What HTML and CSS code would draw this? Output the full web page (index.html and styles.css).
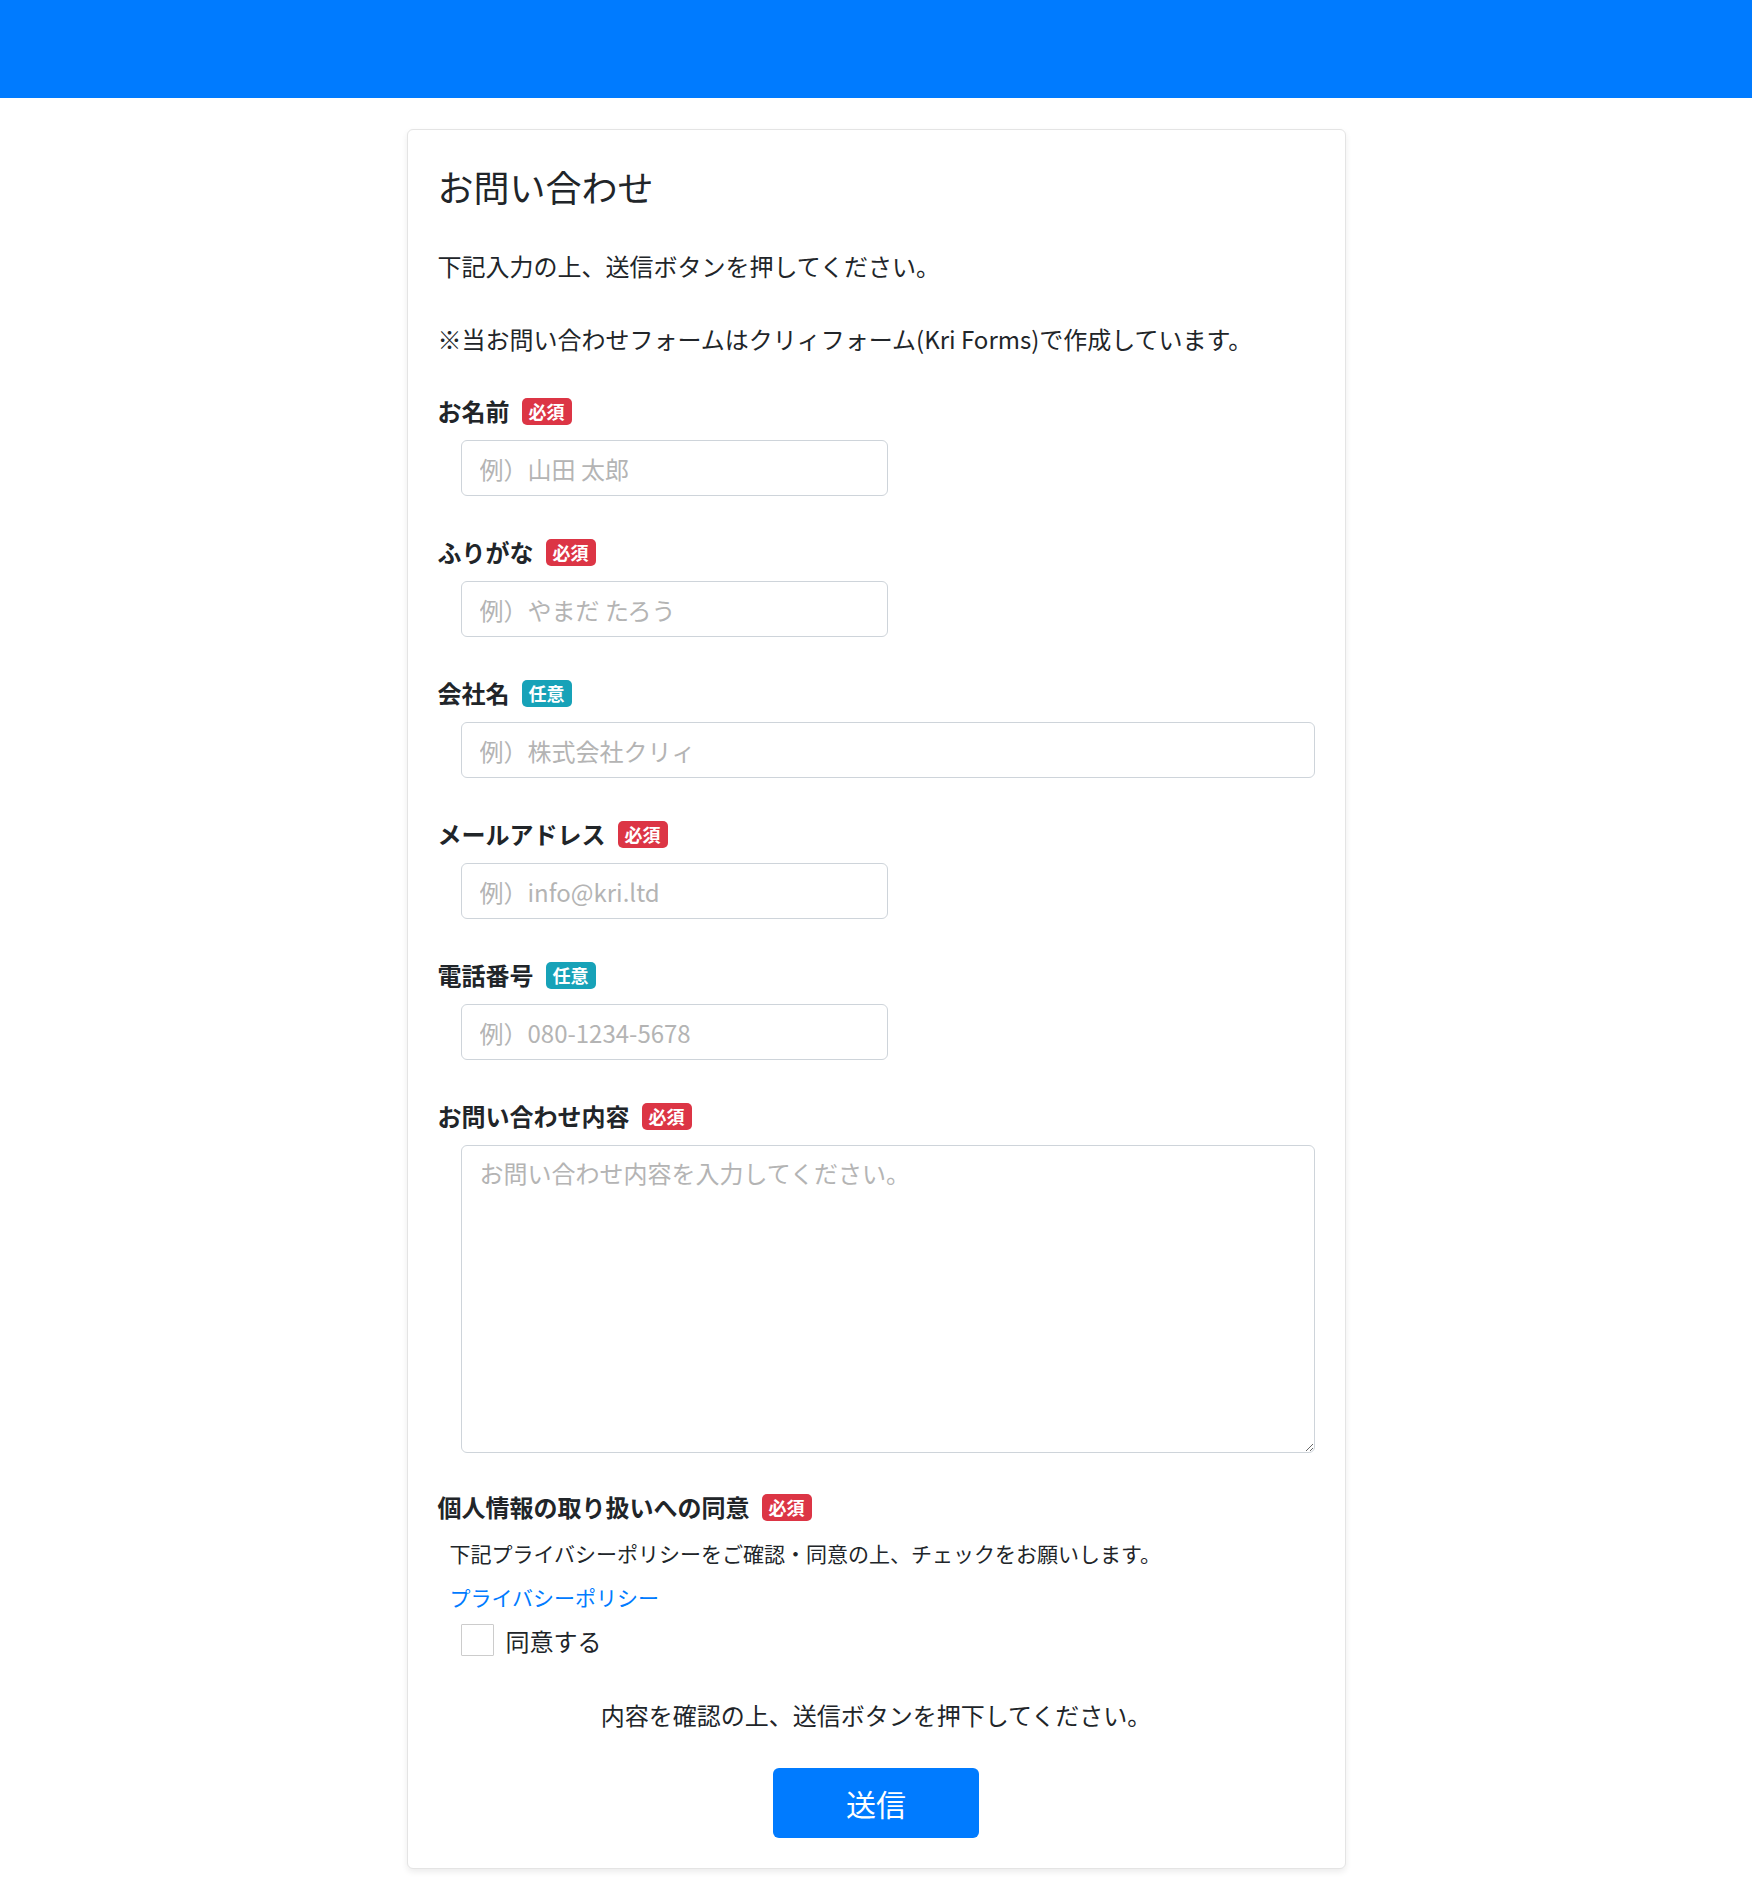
FILE: index.html
```html
<!DOCTYPE html>
<html lang="ja">
<head>
<meta charset="utf-8">
<title>お問い合わせ</title>
<link rel="stylesheet" href="styles.css">
</head>
<body>
<header class="topbar"></header>
<main class="card">
  <h1 class="title">お問い合わせ</h1>
  <p class="lead">下記入力の上、送信ボタンを押してください。</p>
  <p class="lead note">※当お問い合わせフォームはクリィフォーム(Kri Forms)で作成しています。</p>

  <form class="form">
    <div class="group">
      <div class="label-row"><span class="label">お名前</span><span class="badge req">必須</span></div>
      <input class="control narrow" type="text" placeholder="例）山田 太郎">
    </div>
    <div class="group">
      <div class="label-row"><span class="label">ふりがな</span><span class="badge req">必須</span></div>
      <input class="control narrow" type="text" placeholder="例）やまだ たろう">
    </div>
    <div class="group">
      <div class="label-row"><span class="label">会社名</span><span class="badge opt">任意</span></div>
      <input class="control wide" type="text" placeholder="例）株式会社クリィ">
    </div>
    <div class="group">
      <div class="label-row"><span class="label">メールアドレス</span><span class="badge req">必須</span></div>
      <input class="control narrow" type="text" placeholder="例）info@kri.ltd">
    </div>
    <div class="group">
      <div class="label-row"><span class="label">電話番号</span><span class="badge opt">任意</span></div>
      <input class="control narrow" type="text" placeholder="例）080-1234-5678">
    </div>
    <div class="group group-text">
      <div class="label-row"><span class="label">お問い合わせ内容</span><span class="badge req">必須</span></div>
      <textarea class="control wide area" placeholder="お問い合わせ内容を入力してください。"></textarea>
    </div>
    <div class="consent">
      <div class="label-row"><span class="label">個人情報の取り扱いへの同意</span><span class="badge req">必須</span></div>
      <p class="small">下記プライバシーポリシーをご確認・同意の上、チェックをお願いします。</p>
      <a class="link" href="#">プライバシーポリシー</a>
      <label class="check-row"><input class="check" type="checkbox"><span>同意する</span></label>
    </div>
    <p class="confirm">内容を確認の上、送信ボタンを押下してください。</p>
    <div class="actions"><button class="submit" type="button">送信</button></div>
  </form>
</main>
</body>
</html>
```

FILE: styles.css
```css
html, body {
  margin: 0;
  padding: 0;
  background: #ffffff;
}
body {
  font-family: "Noto Sans CJK JP", "Noto Sans", sans-serif;
  color: #212529;
  font-size: 24px;
}
.topbar {
  height: 98px;
  background: #007bff;
}
.card {
  width: 877px;
  margin: 31px auto 30px;
  padding: 30px;
  border: 1px solid #e4e4e4;
  border-radius: 6px;
  box-shadow: 0 3px 6px rgba(0, 0, 0, 0.08);
  background: #fff;
}
.title {
  margin: 0;
  font-size: 36px;
  font-weight: 400;
  line-height: 52px;
}
.lead {
  margin: 36px 0 0;
  font-size: 24px;
  line-height: 36px;
}
.lead.note {
  margin-top: 37px;
}
.form {
  margin-top: 36px;
}
.group {
  margin-bottom: 38px;
}
.group-text {
  margin-bottom: 36px;
}
.label-row {
  display: flex;
  align-items: center;
  height: 36px;
}
.label {
  font-weight: 700;
  font-size: 24px;
  line-height: 36px;
}
.badge {
  display: inline-block;
  margin-left: 12px;
  padding: 0 7px;
  height: 27px;
  line-height: 27px;
  border-radius: 5px;
  color: #fff;
  font-size: 18px;
  font-weight: 700;
}
.badge.req { background: #dc3545; }
.badge.opt { background: #17a2b8; }
.control {
  display: block;
  box-sizing: border-box;
  margin: 11px 0 0 23px;
  height: 56px;
  padding: 9px 18px;
  border: 1px solid #ced4da;
  border-radius: 6px;
  font-family: inherit;
  font-size: 24px;
  line-height: 36px;
  color: #495057;
  background: #fff;
}
.control::placeholder {
  color: #b4b4b4;
}
.narrow { width: 427px; }
.wide { width: 854px; }
.area {
  height: 308px;
  resize: vertical;
}
.small {
  margin: 12px 0 0 12px;
  font-size: 21px;
  line-height: 32px;
}
.link {
  display: block;
  margin: 12px 0 0 12px;
  font-size: 21px;
  line-height: 32px;
  color: #007bff;
  text-decoration: none;
}
.check-row {
  display: flex;
  align-items: center;
  gap: 12px;
  margin: 9px 0 0 23px;
  height: 36px;
  font-size: 24px;
}
.check {
  appearance: none;
  -webkit-appearance: none;
  margin: 0;
  width: 33px;
  height: 32px;
  border: 1px solid #cccccc;
  border-radius: 1px;
  background: #fff;
}
.confirm {
  margin: 39px 0 0;
  text-align: center;
  font-size: 24px;
  line-height: 36px;
}
.actions {
  display: flex;
  justify-content: center;
  margin-top: 35px;
}
.submit {
  width: 206px;
  height: 70px;
  border: 0;
  border-radius: 6px;
  background: #007bff;
  color: #fff;
  font-family: inherit;
  font-size: 30px;
}
```
